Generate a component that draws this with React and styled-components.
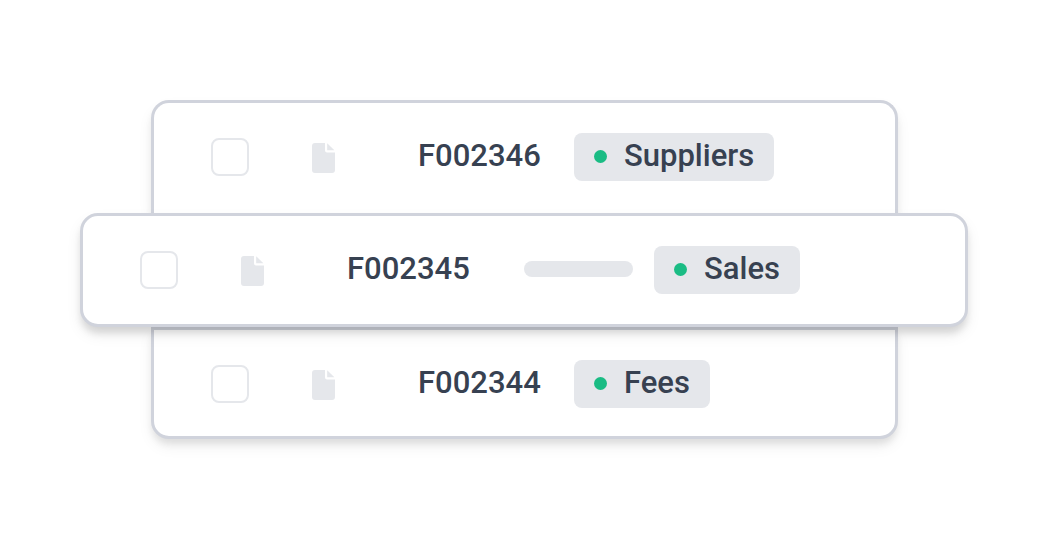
import React from 'react';
import styled, { createGlobalStyle, css } from 'styled-components';

const GlobalStyle = createGlobalStyle`
  *, *::before, *::after { box-sizing: border-box; }
  body {
    margin: 0;
    background: #fff;
    color: #374151;
    font-family: Roboto, "Liberation Sans", sans-serif;
  }
`;

const Page = styled.main`
  min-height: 100vh;
  padding: 100px 77px 100px 80px;
`;

const List = styled.ul`
  list-style: none;
  margin: 0;
  padding: 0;
`;

const Row = styled.li`
  display: flex;
  align-items: center;
  height: 113px;
  margin: 0 70px 0 71px;
  padding: 0 57px;
  border: 3px solid #d0d3dc;
  border-radius: ${(p) => p.$corners};
  background: #fff;
  box-shadow: 0 8px 16px -2px rgba(0, 0, 0, 0.08), 0 6px 7px -1px rgba(0, 0, 0, 0.08);

  &:first-child {
    border-bottom: 0;
    padding-bottom: 3px;
  }

  ${(p) =>
    p.$raised &&
    css`
      position: relative;
      z-index: 1;
      height: 114px;
      margin: 0;
      padding-bottom: 2px;
      box-shadow: 0 8px 16px -2px rgba(0, 0, 0, 0.1), 0 7px 7px -1px rgba(0, 0, 0, 0.1);
    `}

  &:last-child {
    height: 112px;
  }
`;

const Checkbox = styled.input`
  appearance: none;
  flex: none;
  width: 38px;
  height: 38px;
  margin: 1px 63px 0 0;
  border: 2px solid #e5e7eb;
  border-radius: 8px;
  background: #fff;

  &:checked {
    background: #e5e7eb;
  }
`;

const FileIcon = styled.svg`
  flex: none;
  width: 23px;
  height: 30px;
  margin: 3px 83px 0 0;
  fill: #e5e7eb;
`;

const Reference = styled.label`
  flex: none;
  width: 156px;
  font-size: 31px;
  font-weight: 500;
  line-height: 36px;
  padding-bottom: 1px;
`;

const Placeholder = styled.span`
  flex: none;
  width: 109px;
  height: 16px;
  margin: 0 21px;
  border-radius: 8px;
  background: #e5e7eb;
`;

const Tag = styled.span`
  flex: none;
  display: flex;
  align-items: center;
  gap: 17px;
  height: 48px;
  margin-top: 1px;
  padding: 0 20px;
  border-radius: 8px;
  background: #e5e7eb;
  font-size: 31px;
  font-weight: 500;
`;

const TagText = styled.span`
  padding-bottom: 2px;
  line-height: 46px;
`;

const Dot = styled.span`
  width: 13px;
  height: 13px;
  margin-bottom: 1px;
  border-radius: 50%;
  background: #1abc84;
`;

const rows = [
  { id: 'F002346', category: 'Suppliers', corners: '18px 18px 0 0' },
  { id: 'F002345', category: 'Sales', corners: '18px', raised: true, placeholder: true },
  { id: 'F002344', category: 'Fees', corners: '0 0 18px 18px' },
];

export default function App() {
  return (
    <>
      <GlobalStyle />
      <Page>
        <List>
          {rows.map((row) => (
            <Row key={row.id} $corners={row.corners} $raised={row.raised}>
              <Checkbox type="checkbox" id={row.id} />
              <FileIcon viewBox="0 0 23 30" aria-hidden="true">
                <path d="M3 0H13v7.5a2 2 0 0 0 2 2h8V27a3 3 0 0 1-3 3H3a3 3 0 0 1-3-3V3a3 3 0 0 1 3-3z" />
                <path d="M15.2.3 22.4 7.2H15.2z" />
              </FileIcon>
              <Reference htmlFor={row.id}>{row.id}</Reference>
              {row.placeholder && <Placeholder />}
              <Tag>
                <Dot />
                <TagText>{row.category}</TagText>
              </Tag>
            </Row>
          ))}
        </List>
      </Page>
    </>
  );
}
